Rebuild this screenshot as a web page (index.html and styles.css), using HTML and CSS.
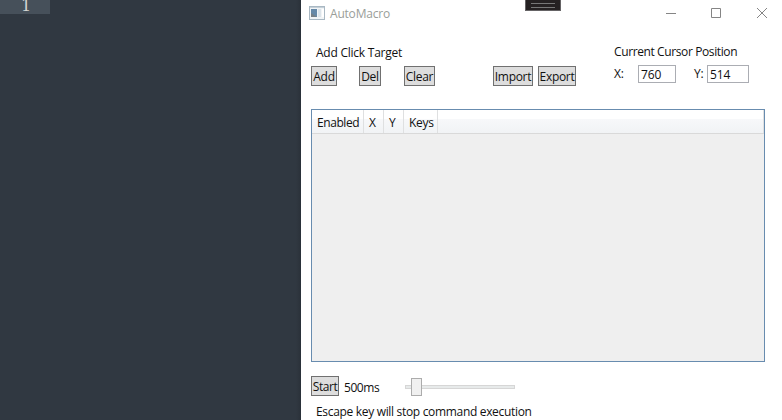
FILE: index.html
```html
<!DOCTYPE html>
<html lang="en">
<head>
<meta charset="utf-8">
<title>AutoMacro</title>
<link rel="stylesheet" href="styles.css">
</head>
<body>
<div class="desktop">
  <aside class="editor"><div class="line-number">1</div></aside>
  <main class="window">
    <header class="titlebar">
      <svg class="app-icon" width="16" height="14" viewBox="0 0 16 14">
        <rect x=".5" y=".5" width="15" height="13" fill="#f1f4f6" stroke="#a9b8c3"/>
        <path d="M1 1.5h14" stroke="#c5d0d8"/>
        <rect x="2" y="3" width="6" height="8" fill="#6689a8"/>
        <path d="M2 11V7l6 4z" fill="#778086"/>
        <rect x="9" y="3" width="3" height="8" fill="#dce4ea"/>
        <rect x="13" y="3" width="2" height="8" fill="#fff"/>
      </svg>
      <span class="title">AutoMacro</span>
      <svg class="controls" width="102" height="12" viewBox="0 0 102 12" fill="none" stroke="#858585">
        <path d="M0 6.5h10M45.500 1.500h9v9h-9z"/>
        <path d="M91 1l10 10M101 1L91 11"/>
      </svg>
      <div class="grip"></div>
    </header>
    <section class="tools">
      <div class="targets">
        <div class="label"><span>Add Click Target</span></div>
        <div class="buttons">
          <button class="btn add"><span>Add</span></button>
          <button class="btn del"><span>Del</span></button>
          <button class="btn clear"><span>Clear</span></button>
          <button class="btn import"><span>Import</span></button>
          <button class="btn export"><span>Export</span></button>
        </div>
      </div>
      <div class="cursor">
        <div class="cursor-title"><span>Current Cursor Position</span></div>
        <div class="coords">
          <span class="axis x">X:</span><span class="field fx">760</span>
          <span class="axis y">Y:</span><span class="field fy">514</span>
        </div>
      </div>
    </section>
    <section class="grid">
      <div class="grid-head">
        <div class="col enabled"><span>Enabled</span></div>
        <div class="col cx"><span>X</span></div>
        <div class="col cy"><span>Y</span></div>
        <div class="col keys"><span>Keys</span></div>
        <div class="col rest"></div>
      </div>
    </section>
    <footer class="footer">
      <div class="run">
        <button class="btn start"><span>Start</span></button>
        <span class="delay">500ms</span>
        <div class="slider"><div class="thumb"></div></div>
      </div>
      <div class="hint"><span>Escape key will stop command execution</span></div>
    </footer>
  </main>
</div>
</body>
</html>
```
FILE: styles.css
```css
* { box-sizing: border-box; }
body { margin: 0; background: #fff; font: 12px/16px "Open Sans", "Noto Sans", sans-serif; color: #111; letter-spacing: -0.3px; }
.desktop { display: flex; width: 782px; height: 420px; overflow: hidden; }
.editor { width: 301px; background: linear-gradient(to right, #303841 296px, #2a3139 301px); }
.line-number { width: 50px; height: 14px; padding-left: 21px; background: #46505a; color: #d6d6d4; font: 16px/12px "DejaVu Serif", serif; letter-spacing: 0; }
.window { width: 481px; display: flex; flex-direction: column; background: #fff; white-space: nowrap; }
.titlebar { position: relative; display: flex; height: 28px; padding: 6px 0 0 8px; }
.app-icon { flex: none; }
.title { margin-left: 5px; color: #9a9e99; line-height: 16px; letter-spacing: -0.2px; }
.controls { position: absolute; left: 365px; top: 7px; }
.grip { position: absolute; left: 224px; top: 0; width: 36px; height: 11px; background: #252122; border: 1px solid #656365; border-top: 0; }
.grip::after { content: ""; display: block; margin: 3px 5px 0; height: 3px; border-top: 1px solid #777; border-bottom: 1px solid #777; }
.tools { display: flex; height: 81px; padding-left: 10px; }
.targets { width: 303px; padding-top: 17px; }
.label { height: 21px; padding-left: 5px; letter-spacing: -0.24px; }
.buttons { display: flex; }
.btn { display: flex; justify-content: center; align-items: center; height: 20px; padding: 1px 0 0; border: 1px solid #707070; border-radius: 0; background: #ddd; font: inherit; color: #111; letter-spacing: inherit; }
.add { width: 26px; margin-right: 22px; }
.del { width: 22px; margin-right: 23px; }
.clear { width: 31px; margin-right: 58px; }
.import { width: 40px; margin-right: 5px; }
.export { width: 38px; }
.cursor { padding-top: 16px; }
.cursor-title { height: 21px; letter-spacing: -0.39px; }
.coords { display: flex; }
.axis { line-height: 17px; }
.axis.x { width: 24px; }
.axis.y { width: 13px; margin-left: 18px; }
.field { height: 18px; padding: 1px 2px; border: 1px solid #abadb3; letter-spacing: -0.1px; }
.fx { width: 38px; }
.fy { width: 42px; }
.grid { width: 454px; height: 253px; margin-left: 10px; border: 1px solid #688caf; background: #efefef; }
.grid-head { display: flex; height: 24px; border-bottom: 1px solid #d9d9d9; background: linear-gradient(#fff 0 9px, #f7f8fa 9px, #f1f3f5 23px); }
.col { padding: 5px 0 0 5px; border-right: 1px solid #dfe0e1; }
.enabled { width: 52px; letter-spacing: -0.42px; }
.cx { width: 20px; }
.cy { width: 20px; }
.keys { width: 34px; }
.rest { flex: 1; }
.footer { padding: 14px 0 0 10px; }
.run { display: flex; height: 28px; }
.start { width: 28px; letter-spacing: -0.45px; }
.delay { width: 66px; padding: 4px 0 0 5px; letter-spacing: -0.45px; }
.slider { width: 110px; height: 4px; margin-top: 9px; border: 1px solid #d6d6d6; background: #e7eaea; }
.thumb { position: relative; left: 5px; top: -8px; width: 11px; height: 18px; border: 1px solid #acacac; background: #f0f0f0; }
.hint { padding-left: 5px; letter-spacing: -0.32px; }
```
